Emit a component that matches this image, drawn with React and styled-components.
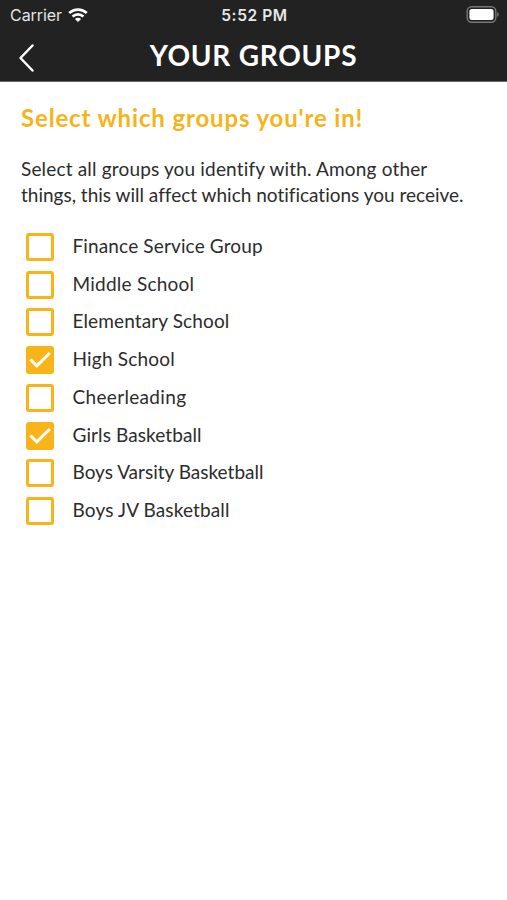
import { useState } from "react";
import styled, { createGlobalStyle } from "styled-components";

const GlobalStyle = createGlobalStyle`
  * {
    box-sizing: border-box;
  }

  body {
    margin: 0;
    background-color: #ffffff;
    font-family: Lato, "Open Sans", sans-serif;
    font-kerning: normal;
    font-variant-ligatures: none;
  }
`;

const Screen = styled.div`
  min-height: 900px;
  background-color: #ffffff;
  color: #2c2c2c;
`;

const Header = styled.header`
  height: 82px;
  background-color: #222222;
  border-bottom: 1px solid #666666;
  color: #ffffff;
`;

const StatusBar = styled.div`
  display: grid;
  grid-template-columns: 1fr auto 1fr;
  align-items: center;
  height: 30px;
  padding: 0 8px 0 10px;
  font-family: Inter, "Liberation Sans", sans-serif;
  font-size: 16px;
  line-height: 20px;
`;

const Carrier = styled.div`
  display: flex;
  align-items: center;
  gap: 6px;
  color: #e4e4e4;
  letter-spacing: -0.05px;
`;

const Time = styled.div`
  padding-top: 1px;
  color: #e8e8e8;
  font-weight: 600;
  font-size: 15.5px;
  letter-spacing: 0.6px;
`;

const BatteryIcon = styled.svg`
  justify-self: end;
`;

const NavBar = styled.div`
  display: grid;
  grid-template-columns: 60px 1fr 60px;
  align-items: center;
  height: 51px;
`;

const BackButton = styled.button`
  display: flex;
  width: 60px;
  padding: 4px 0 0 18px;
  border: none;
  background: none;
  color: #ffffff;
  cursor: pointer;
`;

const Title = styled.h1`
  margin: 0;
  font-size: 28px;
  font-weight: 700;
  line-height: 49px;
  letter-spacing: 0.75px;
  text-align: center;
  white-space: nowrap;
`;

const Content = styled.main`
  padding: 19px 21px;
`;

const Heading = styled.h2`
  margin: 0 0 21px;
  color: #f4b41a;
  font-size: 24px;
  font-weight: 700;
  line-height: 34px;
  letter-spacing: 0.85px;
  white-space: nowrap;
`;

const Description = styled.p`
  margin: 0 0 20px;
  font-size: 19px;
  line-height: 26px;
  white-space: nowrap;
`;

const Line = styled.span`
  display: block;
  letter-spacing: ${(props) => props.$spacing}px;
`;

const GroupList = styled.div`
  display: flex;
  flex-direction: column;
`;

const GroupRow = styled.label`
  display: flex;
  align-items: center;
  gap: 18.5px;
  height: 37.75px;
  padding-left: 5px;
  cursor: pointer;
`;

const HiddenInput = styled.input`
  display: none;
`;

const CheckBox = styled.span`
  display: flex;
  align-items: center;
  justify-content: center;
  width: 28px;
  height: 28px;
  border: 3px solid #f8b418;
  border-radius: 3px;
  background-color: ${(props) => (props.$checked ? "#f8b418" : "#ffffff")};
`;

const GroupName = styled.span`
  padding-bottom: 2px;
  font-size: 19px;
  line-height: 26px;
  letter-spacing: ${(props) => props.$spacing}px;
  white-space: nowrap;
`;

const groups = [
  { name: "Finance Service Group", spacing: 0.14 },
  { name: "Middle School", spacing: 0.24 },
  { name: "Elementary School", spacing: 0.12 },
  { name: "High School", spacing: 0.2 },
  { name: "Cheerleading", spacing: 0.33 },
  { name: "Girls Basketball", spacing: 0.1 },
  { name: "Boys Varsity Basketball", spacing: 0 },
  { name: "Boys JV Basketball", spacing: 0.14 },
];

export default function App() {
  const [selected, setSelected] = useState(["High School", "Girls Basketball"]);

  const handleToggle = (name) => {
    setSelected(
      selected.includes(name)
        ? selected.filter((item) => item !== name)
        : [...selected, name]
    );
  };

  return (
    <Screen>
      <GlobalStyle />
      <Header>
        <StatusBar>
          <Carrier>
            <span>Carrier</span>
            <svg width="20" height="15" viewBox="0 0 20 15" fill="none">
              <path
                d="M1.2 5C6.2 0.4 13.8 0.4 18.8 5"
                stroke="#ffffff"
                strokeWidth="2.8"
              />
              <path
                d="M4.5 8.5C7.7 5.6 12.3 5.6 15.5 8.5"
                stroke="#ffffff"
                strokeWidth="2.6"
              />
              <path d="M6.9 11C8.7 9.4 11.3 9.4 13.1 11L10 14.1Z" fill="#ffffff" />
            </svg>
          </Carrier>
          <Time>5:52 PM</Time>
          <BatteryIcon width="33" height="18" viewBox="0 0 33 18">
            <rect
              x="1.2"
              y="0.8"
              width="28.6"
              height="15.4"
              rx="4.5"
              fill="none"
              stroke="#777777"
              strokeWidth="1.4"
            />
            <rect x="3.4" y="3" width="24.2" height="11" rx="2.5" fill="#ffffff" />
            <path d="M31.2 6Q32.8 6.9 32.8 8.5T31.2 11Z" fill="#777777" />
          </BatteryIcon>
        </StatusBar>
        <NavBar>
          <BackButton aria-label="Back">
            <svg width="18" height="30" viewBox="0 0 18 30" fill="none">
              <path
                d="M14.5 2.5L2.5 15L14.5 27.5"
                stroke="currentColor"
                strokeWidth="2.5"
                strokeLinecap="round"
                strokeLinejoin="round"
              />
            </svg>
          </BackButton>
          <Title>YOUR GROUPS</Title>
        </NavBar>
      </Header>
      <Content>
        <Heading>Select which groups you're in!</Heading>
        <Description>
          <Line $spacing={0.17}>
            Select all groups you identify with. Among other
          </Line>
          <Line $spacing={0}>
            things, this will affect which notifications you receive.
          </Line>
        </Description>
        <GroupList>
          {groups.map((group) => {
            const checked = selected.includes(group.name);
            return (
              <GroupRow key={group.name}>
                <HiddenInput
                  type="checkbox"
                  checked={checked}
                  onChange={() => handleToggle(group.name)}
                />
                <CheckBox $checked={checked}>
                  {checked && (
                    <svg width="22" height="22" viewBox="0 0 22 22" fill="none">
                      <path
                        d="M1.4 10.5L7.8 16.8L20.8 4"
                        stroke="#ffffff"
                        strokeWidth="3.1"
                      />
                    </svg>
                  )}
                </CheckBox>
                <GroupName $spacing={group.spacing}>{group.name}</GroupName>
              </GroupRow>
            );
          })}
        </GroupList>
      </Content>
    </Screen>
  );
}
